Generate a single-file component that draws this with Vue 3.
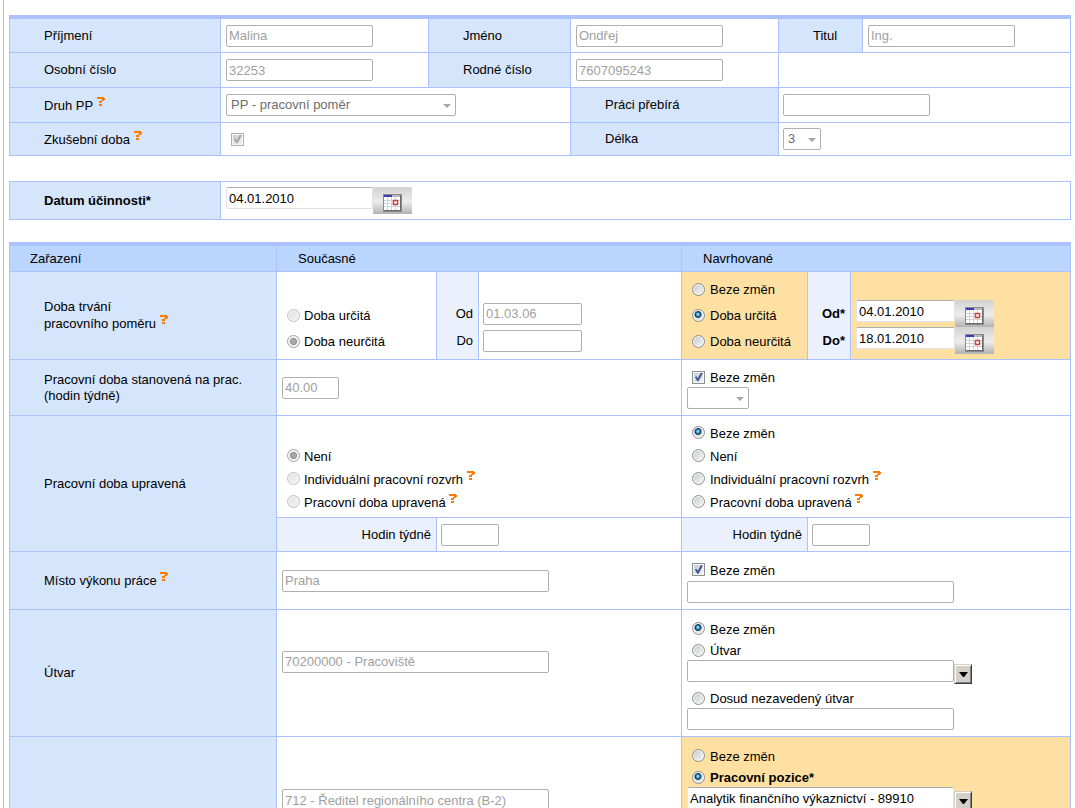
<script setup>
import { h, reactive } from 'vue'

const form = reactive({
  surname: 'Malina',
  firstName: 'Ondřej',
  title: 'Ing.',
  personalNo: '32253',
  birthNo: '7607095243',
  takesOver: '',
  probation: true,
  effective: '04.01.2010',
  currentTerm: 'neurcita',
  currentFrom: '01.03.06',
  currentTo: '',
  newTerm: 'urcita',
  newFrom: '04.01.2010',
  newTo: '18.01.2010',
  currentHours: '40.00',
  keepHours: true,
  currentAdjusted: 'neni',
  newAdjusted: 'beze',
  currentWeekly: '',
  newWeekly: '',
  currentPlace: 'Praha',
  keepPlace: true,
  newPlace: '',
  currentUnit: '70200000 - Pracoviště',
  newUnitMode: 'beze',
  newUnit: '',
  plannedUnit: '',
  currentPosition: '712 - Ředitel regionálního centra (B-2)',
  positionMode: 'pozice',
  newPosition: 'Analytik finančního výkaznictví - 89910'
})

const termOptions = [
  { value: 'urcita', text: 'Doba určitá' },
  { value: 'neurcita', text: 'Doba neurčitá' }
]
const adjustedOptions = [
  { value: 'neni', text: 'Není' },
  { value: 'rozvrh', text: 'Individuální pracovní rozvrh', help: true },
  { value: 'upravena', text: 'Pracovní doba upravená', help: true }
]
const keep = { value: 'beze', text: 'Beze změn' }

const HelpMark = () =>
  h('a', { class: 'help', href: '#', 'aria-label': 'Nápověda' }, [
    h('svg', { width: 8, height: 9, viewBox: '0 0 8 9', 'aria-hidden': 'true' }, [
      h('path', { fill: '#ff7a00', d: 'M0 0h7v1h1v2h-1v1h-2v2H2V4h2V3h1V2H0z M2 7h3v2H2z' })
    ])
  ])

const CalendarButton = () =>
  h('button', { class: 'calendar', type: 'button', 'aria-label': 'Vybrat datum' }, [
    h('svg', { width: 19, height: 18, viewBox: '0 0 19 18', 'aria-hidden': 'true' }, [
      h('path', { fill: '#8a8a8a', d: 'M0 0h19v18h-19z' }),
      h('path', { fill: '#ffffff', d: 'M1 3h16v13h-16z' }),
      h('path', { fill: '#3c3cb4', d: 'M1 1h8v2h-8z' }),
      h('path', { fill: '#b8b8b8', d: 'M9 1h8v2h-8z' }),
      h('path', { stroke: '#d2d2d8', fill: 'none', d: 'M4.500 3v13M8.500 3v13M12.500 3v13M1 6.500h16M1 9.500h16M1 12.500h16' }),
      h('path', { stroke: '#c0483f', fill: '#ffffff', 'stroke-width': 1.5, d: 'M10.500 6.500h4v4h-4z' }),
      h('path', { fill: '#6a6a6a', d: 'M17 2h1v15h-17v-1h16z' })
    ])
  ])

const DropButton = () =>
  h('button', { class: 'drop', type: 'button', 'aria-label': 'Otevřít seznam' }, [
    h('svg', { width: 9, height: 5, viewBox: '0 0 9 5', 'aria-hidden': 'true' }, [
      h('path', { fill: '#000000', d: 'M0 0h9l-4 5h-1z' })
    ])
  ])
</script>

<template>
  <form class="page" @submit.prevent>
    <table class="sheet person thick">
      <colgroup>
        <col class="c-label" /><col class="c-field" /><col class="c-mid" />
        <col class="c-field" /><col class="c-title" /><col />
      </colgroup>
      <tbody>
        <tr class="r34">
          <th><label for="surname">Příjmení</label></th>
          <td><input id="surname" v-model="form.surname" class="text w147" disabled /></td>
          <th><label for="first">Jméno</label></th>
          <td><input id="first" v-model="form.firstName" class="text w147" disabled /></td>
          <th><label for="title">Titul</label></th>
          <td><input id="title" v-model="form.title" class="text w147" disabled /></td>
        </tr>
        <tr class="r35">
          <th><label for="pno">Osobní číslo</label></th>
          <td><input id="pno" v-model="form.personalNo" class="text w147" disabled /></td>
          <th><label for="bno">Rodné číslo</label></th>
          <td><input id="bno" v-model="form.birthNo" class="text w147" disabled /></td>
          <td colspan="2"></td>
        </tr>
        <tr class="r35">
          <th><label for="kind">Druh PP</label> <HelpMark /></th>
          <td colspan="2">
            <span class="select w230">
              <select id="kind" disabled><option>PP - pracovní poměr</option></select>
            </span>
          </td>
          <th><label for="takes">Práci přebírá</label></th>
          <td colspan="2" class="tight"><input id="takes" v-model="form.takesOver" class="text w147" disabled /></td>
        </tr>
        <tr class="r33">
          <th><label for="prob">Zkušební doba</label> <HelpMark /></th>
          <td colspan="2"><input id="prob" v-model="form.probation" class="check lone" type="checkbox" disabled /></td>
          <th><label for="length">Délka</label></th>
          <td colspan="2" class="tight">
            <span class="select w38"><select id="length" disabled><option>3</option></select></span>
          </td>
        </tr>
      </tbody>
    </table>

    <table class="sheet effective">
      <colgroup><col class="c-label" /><col /></colgroup>
      <tbody>
        <tr class="r38">
          <th class="strong"><label for="eff">Datum účinnosti*</label></th>
          <td>
            <div class="picker"><input id="eff" v-model="form.effective" class="text w147" /><CalendarButton /></div>
          </td>
        </tr>
      </tbody>
    </table>

    <table class="sheet thick">
      <colgroup>
        <col class="c-name" /><col class="c-now" /><col class="c-pre" /><col class="c-rest" />
        <col class="c-new" /><col class="c-pre2" /><col />
      </colgroup>
      <thead>
        <tr class="r26">
          <th scope="col">Zařazení</th>
          <th scope="col" colspan="3">Současné</th>
          <th scope="col" colspan="3">Navrhované</th>
        </tr>
      </thead>
      <tbody>
        <tr class="r88">
          <th scope="row">Doba trvání<br />pracovního poměru <HelpMark /></th>
          <td class="bottom">
            <div class="options loose">
              <label v-for="o in termOptions" :key="o.value" class="option">
                <input v-model="form.currentTerm" class="radio" type="radio" name="currentTerm" :value="o.value" disabled />
                <span>{{ o.text }}</span>
              </label>
            </div>
          </td>
          <td class="pale bottom">
            <label class="line" for="cfrom">Od</label>
            <label class="line" for="cto">Do</label>
          </td>
          <td class="tight bottom">
            <div class="line"><input id="cfrom" v-model="form.currentFrom" class="text w99" disabled /></div>
            <div class="line"><input id="cto" v-model="form.currentTo" class="text w99" disabled /></div>
          </td>
          <td class="changed bottom">
            <div class="options loose proposed">
              <label v-for="o in [keep, ...termOptions]" :key="o.value" class="option">
                <input v-model="form.newTerm" class="radio" type="radio" name="newTerm" :value="o.value" />
                <span>{{ o.text }}</span>
              </label>
            </div>
          </td>
          <td class="pale bottom strong">
            <label class="line" for="nfrom">Od*</label>
            <label class="line" for="nto">Do*</label>
          </td>
          <td class="changed bottom">
            <div class="picker"><input id="nfrom" v-model="form.newFrom" class="text w99" /><CalendarButton /></div>
            <div class="picker"><input id="nto" v-model="form.newTo" class="text w99" /><CalendarButton /></div>
          </td>
        </tr>
        <tr class="r56">
          <th scope="row"><label for="hours">Pracovní doba stanovená na prac.<br />(hodin týdně)</label></th>
          <td colspan="3"><input id="hours" v-model="form.currentHours" class="text w57" disabled /></td>
          <td colspan="3" class="bottom field-end">
            <div class="options proposed">
              <label class="option snug">
                <input v-model="form.keepHours" class="check" type="checkbox" /><span>Beze změn</span>
              </label>
            </div>
            <span class="select w62"><select aria-label="Nový počet hodin" disabled><option></option></select></span>
          </td>
        </tr>
        <tr class="r102">
          <th scope="row" rowspan="2">Pracovní doba upravená</th>
          <td colspan="3" class="bottom list-end">
            <div class="options">
              <label v-for="o in adjustedOptions" :key="o.value" class="option">
                <input v-model="form.currentAdjusted" class="radio" type="radio" name="currentAdjusted" :value="o.value" disabled />
                <span>{{ o.text }} <HelpMark v-if="o.help" /></span>
              </label>
            </div>
          </td>
          <td colspan="3" class="bottom list-end">
            <div class="options proposed">
              <label v-for="o in [keep, ...adjustedOptions]" :key="o.value" class="option">
                <input v-model="form.newAdjusted" class="radio" type="radio" name="newAdjusted" :value="o.value" />
                <span>{{ o.text }} <HelpMark v-if="o.help" /></span>
              </label>
            </div>
          </td>
        </tr>
        <tr class="r34">
          <td class="pale"><label for="cweek">Hodin týdně</label></td>
          <td colspan="2" class="tight"><input id="cweek" v-model="form.currentWeekly" class="text w58" disabled /></td>
          <td class="pale"><label for="nweek">Hodin týdně</label></td>
          <td colspan="2" class="tight"><input id="nweek" v-model="form.newWeekly" class="text w58" disabled /></td>
        </tr>
        <tr class="r58">
          <th scope="row"><label for="place">Místo výkonu práce</label> <HelpMark /></th>
          <td colspan="3"><input id="place" v-model="form.currentPlace" class="text w267" disabled /></td>
          <td colspan="3" class="bottom field-end">
            <div class="options proposed">
              <label class="option">
                <input v-model="form.keepPlace" class="check" type="checkbox" /><span>Beze změn</span>
              </label>
            </div>
            <input v-model="form.newPlace" class="text w267" aria-label="Nové místo výkonu práce" disabled />
          </td>
        </tr>
        <tr class="r127">
          <th scope="row"><label for="unit">Útvar</label></th>
          <td colspan="3" class="raised"><input id="unit" v-model="form.currentUnit" class="text w267" disabled /></td>
          <td colspan="3" class="top">
            <div class="options proposed">
              <label class="option">
                <input v-model="form.newUnitMode" class="radio" type="radio" name="unit" value="beze" /><span>Beze změn</span>
              </label>
              <label class="option snug">
                <input v-model="form.newUnitMode" class="radio" type="radio" name="unit" value="utvar" /><span>Útvar</span>
              </label>
            </div>
            <div class="combo">
              <input v-model="form.newUnit" class="text w267" aria-label="Nový útvar" disabled /><DropButton />
            </div>
            <div class="options proposed">
              <label class="option snug">
                <input v-model="form.newUnitMode" class="radio" type="radio" name="unit" value="dosud" /><span>Dosud nezavedený útvar</span>
              </label>
            </div>
            <input v-model="form.plannedUnit" class="text w267" aria-label="Název nezavedeného útvaru" disabled />
          </td>
        </tr>
        <tr class="r150">
          <th scope="row"></th>
          <td colspan="3" class="raised">
            <input v-model="form.currentPosition" class="text w267" aria-label="Současná pozice" disabled />
          </td>
          <td colspan="3" class="changed top">
            <div class="options proposed">
              <label class="option">
                <input v-model="form.positionMode" class="radio" type="radio" name="position" value="beze" /><span>Beze změn</span>
              </label>
              <label class="option snug strong">
                <input v-model="form.positionMode" class="radio" type="radio" name="position" value="pozice" /><span>Pracovní pozice*</span>
              </label>
            </div>
            <div class="combo">
              <input v-model="form.newPosition" class="text w267" aria-label="Nová pozice" /><DropButton />
            </div>
          </td>
        </tr>
      </tbody>
    </table>
  </form>
</template>

<style>
body {
  background: #ffffff;
}
</style>

<style scoped>
.page {
  --line: #abc2ff;
  box-sizing: border-box;
  height: 100vh;
  overflow: hidden;
  margin-left: 3px;
  padding: 15px 4px 0 5px;
  border-left: 1px solid var(--line);
  color: #000000;
  font: 13px/16px "Liberation Sans", Arial, sans-serif;
}
.sheet {
  width: 100%;
  table-layout: fixed;
  border-collapse: separate;
  border-spacing: 0;
  border: solid var(--line);
  border-width: 1px 0 0 1px;
}
.thick { border-top-width: 4px; }
.effective { margin: 25px 0 22px; }

.c-label { width: 211px; }
.c-field { width: 208px; }
.c-mid { width: 142px; }
.c-title { width: 84px; }
.c-name { width: 267px; }
.c-now { width: 160px; }
.c-pre { width: 42px; }
.c-rest { width: 203px; }
.c-new { width: 126px; }
.c-pre2 { width: 43px; }

.r26 { height: 26px; }
.r33 { height: 33px; }
.r34 { height: 34px; }
.r35 { height: 35px; }
.r38 { height: 38px; }
.r56 { height: 56px; }
.r58 { height: 58px; }
.r88 { height: 88px; }
.r102 { height: 102px; }
.r127 { height: 127px; }
.r150 { height: 150px; }

th,
td {
  box-sizing: border-box;
  padding: 0 0 0 5px;
  border: solid var(--line);
  border-width: 0 1px 1px 0;
  text-align: left;
  vertical-align: middle;
  font-weight: normal;
}
th {
  padding-left: 34px;
  background: #d5e5fb;
}
thead th {
  padding-left: 21px;
  background: #bad6ff;
}
thead th:first-child { padding-left: 20px; }
.tight { padding-left: 4px; }
.pale {
  padding: 0 5px 0 0;
  background: #eaf1fd;
  text-align: right;
}
.changed { background: #ffe0a3; }
.strong { font-weight: bold; }
.bottom {
  vertical-align: bottom;
  padding-bottom: 5px;
}
.field-end { padding-bottom: 6px; }
.list-end { padding-bottom: 4px; }
.top {
  vertical-align: top;
  padding-top: 7px;
}
.raised { padding-bottom: 23px; }

.text,
.select {
  box-sizing: border-box;
  display: block;
  height: 22px;
  border: 1px solid #e2e3ea;
  border-top-color: #abadb3;
  border-radius: 2px;
  background: #ffffff;
  color: #000000;
  font: inherit;
}
.text {
  margin: 0;
  padding: 0 2px;
  outline: 0;
}
.text:disabled,
.select {
  border-color: #afafaf;
}
.text:disabled { color: #9f9f9f; }
.w38 { width: 38px; }
.w57 { width: 57px; }
.w58 { width: 58px; }
.w62 { width: 62px; }
.w99 { width: 99px; }
.w147 { width: 147px; }
.w230 { width: 230px; }
.w267 { width: 267px; }

.select { position: relative; }
.select select {
  appearance: none;
  display: block;
  width: 100%;
  height: 20px;
  margin: 0;
  padding: 0 4px;
  border: 0;
  background: none;
  color: #6d6d6d;
  font: inherit;
  opacity: 1;
}
.select::after {
  content: "";
  position: absolute;
  top: 9px;
  right: 4px;
  border: solid transparent;
  border-width: 4px 4px 0;
  border-top-color: #a6a6a6;
}

.line {
  display: flex;
  align-items: center;
  height: 27px;
}
.pale .line { justify-content: flex-end; }
.picker {
  display: flex;
  align-items: flex-start;
}
.combo {
  display: flex;
  align-items: flex-end;
  height: 24px;
  margin-bottom: 4px;
}
.combo .text { align-self: flex-start; }

:deep(.calendar) {
  display: block;
  width: 39px;
  height: 27px;
  padding: 5px 0 0;
  border: 0;
  background: linear-gradient(#d2d2d2, #ededed 55%, #b2b2b2);
}
:deep(.calendar svg),
:deep(.drop svg) {
  display: block;
  margin: 0 auto;
}
:deep(.drop) {
  box-sizing: border-box;
  width: 18px;
  height: 20px;
  padding: 1px;
  border: 1px solid;
  border-color: #d4d0c8 #404040 #404040 #d4d0c8;
  background: #d4d0c8;
  box-shadow: inset 1px 1px #ffffff, inset -1px -1px #808080;
}
:deep(.help) {
  display: inline-block;
  width: 8px;
  height: 9px;
  vertical-align: 4px;
  line-height: 0;
}

.options { padding-left: 5px; }
.option {
  display: flex;
  align-items: center;
  gap: 4px;
  height: 23px;
}
.option > span { padding-top: 2px; }
.loose .option { height: 26px; }
.proposed .option { gap: 5px; }
.options .snug { height: 20px; }

.radio,
.check {
  appearance: none;
  box-sizing: border-box;
  flex: none;
  width: 13px;
  height: 13px;
  margin: 0;
  border: 1px solid #8e8f8f;
  background: linear-gradient(135deg, #c4c8cc, #f8f8f8);
  box-shadow: inset 0 0 0 1px #f6f6f6;
}
.radio { border-radius: 50%; }
.radio:checked {
  background: radial-gradient(circle at 45% 40%, #7fd2f5 0 1px, #1c6d9c 2px, #0c3653 3px, #dfe3e6 4px);
}
.radio:disabled {
  border-color: #c2c2c2;
  background: linear-gradient(135deg, #dedede, #f6f6f6);
}
.radio:checked:disabled {
  border-color: #a4a4a4;
  background: radial-gradient(circle, #a8a8a8 0 2px, #8c8c8c 3px, #f0f0f0 4px);
}
.check { display: grid; }
.check::before {
  content: "";
  width: 9px;
  height: 9px;
  margin: 1px;
  background: #3f559c;
  clip-path: polygon(10% 50%, 28% 42%, 42% 64%, 76% 0, 98% 8%, 50% 98%, 36% 98%);
}
.check:disabled { border-color: #b1b1b1; }
.check:disabled::before { background: #a6a6a6; }
.lone { margin-left: 5px; }
</style>
